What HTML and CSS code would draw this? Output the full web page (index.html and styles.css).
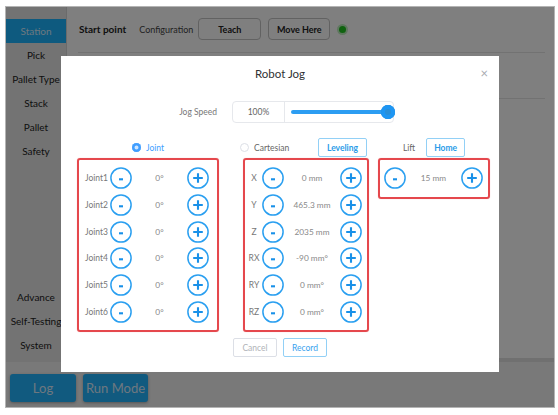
FILE: index.html
```html
<!DOCTYPE html>
<html>
<head>
<meta charset="utf-8">
<link rel="stylesheet" href="styles.css">
</head>
<body>
<div class="frame">
  <div class="app">
    <div class="main">
      <nav class="sidebar">
        <div class="nav-group">
          <div class="nav-item active">Station</div>
          <div class="nav-item">Pick</div>
          <div class="nav-item">Pallet Type</div>
          <div class="nav-item">Stack</div>
          <div class="nav-item">Pallet</div>
          <div class="nav-item">Safety</div>
        </div>
        <div class="nav-group">
          <div class="nav-item">Advance</div>
          <div class="nav-item">Self-Testing</div>
          <div class="nav-item">System</div>
        </div>
      </nav>
      <section class="content">
        <div class="top-row">
          <span class="row-title">Start point</span>
          <span class="row-label">Configuration</span>
          <button class="page-btn teach">Teach</button>
          <button class="page-btn move">Move Here</button>
          <span class="status-dot"></span>
        </div>
        <div class="second-row"></div>
      </section>
    </div>
    <div class="bottombar">
      <button class="big-btn log">Log</button>
      <button class="big-btn run">Run Mode</button>
    </div>

    <div class="overlay"></div>
    <div class="modal">
      <div class="modal-header">
        <span class="modal-title">Robot Jog</span>
        <span class="modal-close">×</span>
      </div>
      <div class="speed-row">
        <span class="speed-label">Jog Speed</span>
        <div class="speed-box">
          <span class="speed-value">100%</span>
          <div class="slider">
            <div class="slider-track"></div>
            <div class="slider-thumb"></div>
          </div>
        </div>
      </div>
      <div class="columns">
        <div class="col col-joint">
          <div class="col-head center">
            <span class="radio checked"></span><span class="radio-text active">Joint</span>
          </div>
          <div class="jog-box">
            <div class="jog-row"><span class="jl">Joint1</span><span class="cbtn"><svg viewBox="0 0 22 22"><circle cx="11" cy="11" r="10.1"/><path d="M9 12.3H13"/></svg></span><span class="jv">0°</span><span class="cbtn"><svg viewBox="0 0 22 22"><circle cx="11" cy="11" r="10.1"/><path d="M11 6.2V15.8M6.2 11H15.8"/></svg></span></div>
            <div class="jog-row"><span class="jl">Joint2</span><span class="cbtn"><svg viewBox="0 0 22 22"><circle cx="11" cy="11" r="10.1"/><path d="M9 12.3H13"/></svg></span><span class="jv">0°</span><span class="cbtn"><svg viewBox="0 0 22 22"><circle cx="11" cy="11" r="10.1"/><path d="M11 6.2V15.8M6.2 11H15.8"/></svg></span></div>
            <div class="jog-row"><span class="jl">Joint3</span><span class="cbtn"><svg viewBox="0 0 22 22"><circle cx="11" cy="11" r="10.1"/><path d="M9 12.3H13"/></svg></span><span class="jv">0°</span><span class="cbtn"><svg viewBox="0 0 22 22"><circle cx="11" cy="11" r="10.1"/><path d="M11 6.2V15.8M6.2 11H15.8"/></svg></span></div>
            <div class="jog-row"><span class="jl">Joint4</span><span class="cbtn"><svg viewBox="0 0 22 22"><circle cx="11" cy="11" r="10.1"/><path d="M9 12.3H13"/></svg></span><span class="jv">0°</span><span class="cbtn"><svg viewBox="0 0 22 22"><circle cx="11" cy="11" r="10.1"/><path d="M11 6.2V15.8M6.2 11H15.8"/></svg></span></div>
            <div class="jog-row"><span class="jl">Joint5</span><span class="cbtn"><svg viewBox="0 0 22 22"><circle cx="11" cy="11" r="10.1"/><path d="M9 12.3H13"/></svg></span><span class="jv">0°</span><span class="cbtn"><svg viewBox="0 0 22 22"><circle cx="11" cy="11" r="10.1"/><path d="M11 6.2V15.8M6.2 11H15.8"/></svg></span></div>
            <div class="jog-row"><span class="jl">Joint6</span><span class="cbtn"><svg viewBox="0 0 22 22"><circle cx="11" cy="11" r="10.1"/><path d="M9 12.3H13"/></svg></span><span class="jv">0°</span><span class="cbtn"><svg viewBox="0 0 22 22"><circle cx="11" cy="11" r="10.1"/><path d="M11 6.2V15.8M6.2 11H15.8"/></svg></span></div>
          </div>
        </div>
        <div class="col col-cart">
          <div class="col-head between">
            <span class="radio-wrap"><span class="radio"></span><span class="radio-text">Cartesian</span></span>
            <button class="mini-btn leveling">Leveling</button>
          </div>
          <div class="jog-box">
            <div class="jog-row cart"><span class="jl">X</span><span class="cbtn"><svg viewBox="0 0 22 22"><circle cx="11" cy="11" r="10.1"/><path d="M9 12.3H13"/></svg></span><span class="jv">0 mm</span><span class="cbtn"><svg viewBox="0 0 22 22"><circle cx="11" cy="11" r="10.1"/><path d="M11 6.2V15.8M6.2 11H15.8"/></svg></span></div>
            <div class="jog-row cart"><span class="jl">Y</span><span class="cbtn"><svg viewBox="0 0 22 22"><circle cx="11" cy="11" r="10.1"/><path d="M9 12.3H13"/></svg></span><span class="jv">465.3 mm</span><span class="cbtn"><svg viewBox="0 0 22 22"><circle cx="11" cy="11" r="10.1"/><path d="M11 6.2V15.8M6.2 11H15.8"/></svg></span></div>
            <div class="jog-row cart"><span class="jl">Z</span><span class="cbtn"><svg viewBox="0 0 22 22"><circle cx="11" cy="11" r="10.1"/><path d="M9 12.3H13"/></svg></span><span class="jv">2035 mm</span><span class="cbtn"><svg viewBox="0 0 22 22"><circle cx="11" cy="11" r="10.1"/><path d="M11 6.2V15.8M6.2 11H15.8"/></svg></span></div>
            <div class="jog-row cart"><span class="jl">RX</span><span class="cbtn"><svg viewBox="0 0 22 22"><circle cx="11" cy="11" r="10.1"/><path d="M9 12.3H13"/></svg></span><span class="jv">-90 mm°</span><span class="cbtn"><svg viewBox="0 0 22 22"><circle cx="11" cy="11" r="10.1"/><path d="M11 6.2V15.8M6.2 11H15.8"/></svg></span></div>
            <div class="jog-row cart"><span class="jl">RY</span><span class="cbtn"><svg viewBox="0 0 22 22"><circle cx="11" cy="11" r="10.1"/><path d="M9 12.3H13"/></svg></span><span class="jv">0 mm°</span><span class="cbtn"><svg viewBox="0 0 22 22"><circle cx="11" cy="11" r="10.1"/><path d="M11 6.2V15.8M6.2 11H15.8"/></svg></span></div>
            <div class="jog-row cart"><span class="jl">RZ</span><span class="cbtn"><svg viewBox="0 0 22 22"><circle cx="11" cy="11" r="10.1"/><path d="M9 12.3H13"/></svg></span><span class="jv">0 mm°</span><span class="cbtn"><svg viewBox="0 0 22 22"><circle cx="11" cy="11" r="10.1"/><path d="M11 6.2V15.8M6.2 11H15.8"/></svg></span></div>
          </div>
        </div>
        <div class="col col-lift">
          <div class="col-head center lift-head">
            <span class="lift-text">Lift</span>
            <button class="mini-btn home">Home</button>
          </div>
          <div class="jog-box lift-box">
            <div class="jog-row lift"><span class="cbtn"><svg viewBox="0 0 22 22"><circle cx="11" cy="11" r="10.1"/><path d="M9 12.3H13"/></svg></span><span class="jv">15 mm</span><span class="cbtn"><svg viewBox="0 0 22 22"><circle cx="11" cy="11" r="10.1"/><path d="M11 6.2V15.8M6.2 11H15.8"/></svg></span></div>
          </div>
        </div>
      </div>
      <div class="modal-footer">
        <button class="foot-btn cancel">Cancel</button>
        <button class="foot-btn record">Record</button>
      </div>
    </div>
  </div>
</div>
</body>
</html>
```
FILE: styles.css
```css
* { box-sizing: border-box; }
html, body { margin: 0; padding: 0; background: #fff; }
body { font-family: "Lato", "Liberation Sans", sans-serif; }
button { font-family: inherit; cursor: default; }

.frame {
  margin: 6px 0 0 5px;
  width: 550px;
  height: 402px;
  border: 1px solid #b4b4b4;
}
.app {
  position: relative;
  width: 548px;
  height: 400px;
  display: flex;
  flex-direction: column;
  overflow: hidden;
  background: #fff;
}
.main { flex: 1; display: flex; min-height: 0; }

.sidebar {
  width: 61px;
  background: #e6e6e6;
  border-right: 1px solid #d6d6d6;
  display: flex;
  flex-direction: column;
  justify-content: space-between;
  padding: 12px 0 5px;
}
.nav-item {
  height: 24px;
  line-height: 24px;
  text-align: center;
  font-size: 10px;
  color: #222;
  white-space: nowrap;
}
.nav-item.active { background: #1cb4ff; color: #d8f0ff; }

.content { flex: 1; padding: 0 9px 0 11px; border-bottom: 4px solid #e0e0e0; }
.top-row {
  height: 46px;
  display: flex;
  align-items: center;
  border-bottom: 1px solid #e4e4e4;
  padding-bottom: 1px;
}
.row-title { font-size: 10px; font-weight: 700; color: #222; margin-left: 1px; }
.row-label { font-size: 9px; color: #444; margin-left: 13px; }
.page-btn {
  height: 22px;
  border: 1px solid #c4c4c4;
  border-radius: 4px;
  background: #fff;
  font-size: 9px;
  font-weight: 700;
  color: #222;
  padding: 0;
}
.teach { width: 63px; margin-left: 5px; }
.move { width: 62px; margin-left: 7px; }
.status-dot {
  width: 7px; height: 7px; border-radius: 50%;
  background: #1fc41f;
  box-shadow: 0 0 0 2px #bfeebf;
  margin-left: 9px;
}
.second-row { height: 46px; border-bottom: 1px solid #e4e4e4; }

.bottombar {
  height: 45px;
  background: #f2f2f2;
  display: flex;
  align-items: flex-start;
  padding: 12px 0 0 4px;
  gap: 7px;
}
.big-btn {
  height: 28px;
  border: none;
  border-radius: 3px;
  background: #22b4ff;
  color: #dcefff;
  font-size: 13px;
  box-shadow: 0 1px 3px rgba(0,0,0,0.3);
  padding: 0;
}
.log { width: 66px; }
.run { width: 65px; }

.overlay {
  position: absolute;
  inset: 0;
  background: rgba(0,0,0,0.5);
}
.modal {
  position: absolute;
  left: 55px;
  top: 49px;
  width: 438px;
  height: 316px;
  background: #fff;
  display: flex;
  flex-direction: column;
}
.modal-header {
  height: 34px;
  display: flex;
  align-items: center;
  justify-content: center;
  position: relative;
}
.modal-title { font-size: 11.5px; color: #303133; margin-top: 1px; }
.modal-close {
  position: absolute;
  right: 11px;
  top: 9px;
  font-size: 13px;
  color: #a8abb2;
}

.speed-row {
  margin-top: 11px;
  height: 22px;
  display: flex;
  align-items: center;
  padding-left: 110px;
}
.speed-label {
  width: 46px;
  text-align: right;
  font-size: 8.5px;
  color: #777;
  margin-right: 15px;
  white-space: nowrap;
}
.speed-box {
  width: 162px;
  height: 22px;
  border: 1px solid #e6e8ec;
  border-radius: 4px;
  display: flex;
  align-items: center;
}
.speed-value {
  width: 52px;
  height: 100%;
  border-right: 1px solid #e6e8ec;
  font-size: 8.5px;
  color: #666;
  display: flex;
  align-items: center;
  justify-content: center;
}
.slider { position: relative; flex: 1; height: 100%; display: flex; align-items: center; padding-left: 6px; }
.slider-track { width: 96px; height: 4px; border-radius: 2px; background: #2c9df2; }
.slider-thumb {
  position: absolute;
  right: -2px;
  top: 3px;
  width: 14px;
  height: 14px;
  border-radius: 50%;
  background: #1a93f2;
  box-shadow: inset 0 0 0 4px #1e96f3, inset 0 0 0 7px #2a8fd8;
}

.columns {
  margin-top: 15px;
  display: flex;
  padding-left: 16px;
}
.col-joint { width: 142px; }
.col-cart { width: 126px; margin-left: 24px; }
.col-lift { width: 112px; margin-left: 9px; }
.col-head {
  height: 19px;
  display: flex;
  align-items: center;
  margin-bottom: 1px;
}
.col-head.center { justify-content: center; }
.col-head.between { justify-content: space-between; padding-right: 2px; margin-left: -3px; }
.radio-wrap { display: flex; align-items: center; }
.radio {
  width: 9px; height: 9px; border-radius: 50%;
  border: 1px solid #dcdfe6;
  background: #fff;
  display: inline-block;
}
.radio.checked {
  border: none;
  background: #409eff;
  box-shadow: inset 0 0 0 2.5px #409eff, inset 0 0 0 6px #cfe6ff;
}
.radio-text { font-size: 8.5px; color: #666; margin-left: 5px; }
.radio-text.active { color: #409eff; }

.mini-btn {
  height: 19px;
  border: 1px solid #92d0f6;
  border-radius: 2px;
  background: #fff;
  color: #2a9be8;
  font-size: 8.5px;
  font-weight: 700;
  padding: 0;
}
.leveling { width: 49px; }
.home { width: 39px; margin-left: 11px; }
.lift-text { font-size: 8.5px; color: #666; }
.lift-head { padding-left: 0; }

.jog-box {
  border: 2px solid #e5484d;
  border-radius: 3px;
  padding: 5px 0;
  box-shadow: 0 0 1px rgba(229,72,77,0.4);
}
.jog-row {
  height: 26.7px;
  display: flex;
  align-items: center;
  padding: 0 8px 0 6px;
}
.jl { width: 25px; font-size: 8.5px; color: #777; white-space: nowrap; }
.jv { flex: 1; text-align: center; font-size: 8.3px; color: #888; white-space: nowrap; }
.cbtn { width: 22px; height: 22px; display: block; }
.cbtn svg { width: 22px; height: 22px; display: block; }
.cbtn circle { fill: #fff; stroke: #2a9ff0; stroke-width: 1.5; }
.cbtn path { stroke: #1890e8; stroke-width: 2.1; fill: none; }

.jog-row.cart { padding: 0 5px 0 1px; }
.jog-row.cart .jl { width: 16px; text-align: center; }
.jog-row.lift { padding: 0 5px 0 4px; }

.modal-footer {
  margin-top: 6px;
  display: flex;
  justify-content: center;
  gap: 6px;
}
.foot-btn {
  width: 44px;
  height: 19px;
  border-radius: 2px;
  background: #fff;
  font-size: 8.5px;
  padding: 0;
}
.cancel { border: 1px solid #dcdfe6; color: #b0b3b8; }
.record { border: 1px solid #92d0f6; color: #3aa2ee; }
```
